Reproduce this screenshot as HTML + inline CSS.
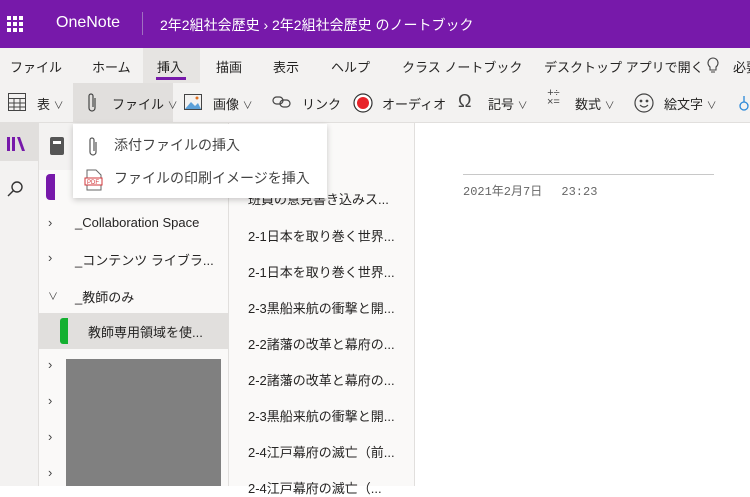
<!DOCTYPE html>
<html><head><meta charset="utf-8"><style>
*{margin:0;padding:0;box-sizing:border-box}
body{width:750px;height:486px;overflow:hidden;position:relative;font-family:"Liberation Sans","Noto Sans CJK JP",sans-serif;background:#fff;color:#252423}
.a{position:absolute;white-space:nowrap}
.hdr{left:0;top:0;width:750px;height:48px;background:#7719aa;color:#fff}
.tabs{left:0;top:48px;width:750px;height:35px;background:#f3f2f1;font-size:13px}
.tb{left:0;top:83px;width:750px;height:39px;background:#f3f2f1;font-size:13px}
.chev{font-size:10px;color:#444}
.pg{font-size:13px;left:248px}
.sec{font-size:13px}
</style></head><body>
<div class="a hdr">
  <svg class="a" style="left:7px;top:16px" width="16" height="16"><g fill="#fff">
  <rect x="0" y="0" width="4" height="4"/><rect x="6" y="0" width="4" height="4"/><rect x="12" y="0" width="4" height="4"/>
  <rect x="0" y="6" width="4" height="4"/><rect x="6" y="6" width="4" height="4"/><rect x="12" y="6" width="4" height="4"/>
  <rect x="0" y="12" width="4" height="4"/><rect x="6" y="12" width="4" height="4"/><rect x="12" y="12" width="4" height="4"/></g></svg>
  <div class="a" style="left:56px;top:14px;font-size:16px">OneNote</div>
  <div class="a" style="left:142px;top:12px;width:1px;height:23px;background:#a070c0"></div>
  <div class="a" style="left:160px;top:15px;font-size:14px">2年2組社会歴史 › 2年2組社会歴史 のノートブック</div>
</div>
<div class="a tabs">
  <div class="a" style="left:143px;top:0;width:57px;height:35px;background:#e6e4e2"></div>
  <div class="a" style="left:10px;top:9px">ファイル</div>
  <div class="a" style="left:92px;top:9px">ホーム</div>
  <div class="a" style="left:157px;top:9px">挿入</div>
  <div class="a" style="left:156px;top:29px;width:30px;height:3px;background:#7719aa"></div>
  <div class="a" style="left:216px;top:9px">描画</div>
  <div class="a" style="left:273px;top:9px">表示</div>
  <div class="a" style="left:331px;top:9px">ヘルプ</div>
  <div class="a" style="left:402px;top:9px">クラス ノートブック</div>
  <div class="a" style="left:544px;top:9px">デスクトップ アプリで開く</div>
  <svg class="a" style="left:707px;top:9px" width="12" height="18" fill="none" stroke="#444" stroke-width="1.1"><path d="M3 10a5 5 0 1 1 6 0v3H3z M4 15h4"/></svg>
  <div class="a" style="left:733px;top:9px">必要</div>
</div>
<div class="a tb">
  <div class="a" style="left:73px;top:0;width:100px;height:39px;background:#e1dfdd"></div>
  <svg class="a" style="left:8px;top:10px" width="18" height="18" fill="none" stroke="#444"><rect x=".5" y=".5" width="17" height="17"/><path d="M.5 5.5h17M.5 10h17M.5 14h17M6 5.5v12M12 5.5v12"/></svg>
  <div class="a" style="left:37px;top:11px">表 <span class="chev">∨</span></div>
  <svg class="a" style="left:86px;top:9px" width="12" height="22" fill="none" stroke="#444" stroke-width="1.2"><path d="M9 6v10a3 3 0 0 1-6 0V4a2 2 0 0 1 4 0v11"/></svg>
  <div class="a" style="left:112px;top:11px">ファイル <span class="chev">∨</span></div>
  <svg class="a" style="left:184px;top:11px" width="18" height="16"><rect x=".5" y=".5" width="17" height="15" fill="none" stroke="#444"/><path d="M1 15l6-7 4 4 3-3 3 6z" fill="#5ca0d8"/><circle cx="13" cy="4" r="1.5" fill="#e07020"/></svg>
  <div class="a" style="left:213px;top:11px">画像 <span class="chev">∨</span></div>
  <svg class="a" style="left:272px;top:13px" width="20" height="12" fill="none" stroke="#444" stroke-width="1.2"><rect x="1" y="1" width="10" height="7" rx="3.5"/><rect x="8" y="4" width="10" height="7" rx="3.5"/></svg>
  <div class="a" style="left:302px;top:11px">リンク</div>
  <svg class="a" style="left:353px;top:10px" width="20" height="20"><circle cx="10" cy="10" r="9" fill="#fff" stroke="#333" stroke-width="1.2"/><circle cx="10" cy="10" r="6" fill="#e8232a"/></svg>
  <div class="a" style="left:382px;top:11px">オーディオ</div>
  <div class="a" style="left:458px;top:8px;font-size:18px;color:#444">Ω</div>
  <div class="a" style="left:488px;top:11px">記号 <span class="chev">∨</span></div>
  <div class="a" style="left:547px;top:6px;font-size:11px;color:#444;line-height:9px;text-align:center">+÷<br>×=</div>
  <div class="a" style="left:575px;top:11px">数式 <span class="chev">∨</span></div>
  <svg class="a" style="left:634px;top:10px" width="20" height="20" fill="none" stroke="#444" stroke-width="1.2"><circle cx="10" cy="10" r="9"/><circle cx="7" cy="8" r=".8" fill="#444"/><circle cx="13" cy="8" r=".8" fill="#444"/><path d="M6 12q4 4 8 0"/></svg>
  <div class="a" style="left:664px;top:11px">絵文字 <span class="chev">∨</span></div>
  <svg class="a" style="left:738px;top:11px" width="12" height="18" fill="none" stroke="#2b88d8" stroke-width="1.3"><circle cx="6" cy="12" r="4"/><path d="M6 8V2"/></svg>
</div>
<div class="a" style="left:0;top:122px;width:750px;height:1px;background:#e1dfdd"></div>
<div class="a" style="left:0;top:123px;width:38px;height:363px;background:#f3f2f1"></div>
<div class="a" style="left:0;top:123px;width:38px;height:38px;background:#e1dfdd"></div>
<svg class="a" style="left:6px;top:136px" width="20" height="16" fill="#7719aa"><rect x="1" y="1" width="3" height="14"/><rect x="6" y="1" width="3" height="14"/><path d="M11 1h3l5 14h-3z"/></svg>
<svg class="a" style="left:6px;top:180px" width="18" height="18" fill="none" stroke="#333" stroke-width="1.4"><circle cx="11" cy="7" r="5"/><path d="M7.5 10.5L2 16"/></svg>
<div class="a" style="left:38px;top:123px;width:190px;height:363px;background:#faf9f8;border-left:1px solid #e1dfdd"></div>
<div class="a" style="left:39px;top:123px;width:189px;height:47px;background:#f3f2f1"></div>
<svg class="a" style="left:50px;top:137px" width="16" height="18"><rect x="0" y="0" width="14" height="18" rx="2" fill="#555"/><rect x="3" y="4" width="8" height="3" fill="#fff"/></svg>
<div class="a" style="left:46px;top:174px;width:9px;height:26px;background:#7719aa;border-radius:4px 0 0 4px"></div>
<div class="a chev" style="left:48px;top:215px;font-size:13px">›</div>
<div class="a sec" style="left:75px;top:215px">_Collaboration Space</div>
<div class="a chev" style="left:48px;top:250px;font-size:13px">›</div>
<div class="a sec" style="left:75px;top:250px">_コンテンツ ライブラ...</div>
<div class="a chev" style="left:48px;top:288px">∨</div>
<div class="a sec" style="left:75px;top:287px">_教師のみ</div>
<div class="a" style="left:39px;top:313px;width:189px;height:36px;background:#e1dfdd"></div>
<div class="a" style="left:60px;top:318px;width:8px;height:26px;background:#13b030;border-radius:3px 0 0 3px"></div>
<div class="a sec" style="left:88px;top:322px">教師専用領域を使...</div>
<div class="a" style="left:66px;top:359px;width:155px;height:127px;background:#808080"></div>
<div class="a chev" style="left:48px;top:357px;font-size:13px">›</div>
<div class="a chev" style="left:48px;top:393px;font-size:13px">›</div>
<div class="a chev" style="left:48px;top:429px;font-size:13px">›</div>
<div class="a chev" style="left:48px;top:465px;font-size:13px">›</div>
<div class="a" style="left:228px;top:123px;width:187px;height:363px;background:#faf9f8;border-left:1px solid #e1dfdd;border-right:1px solid #e1dfdd"></div>
<div class="a pg" style="top:189px">班員の意見書き込みス...</div>
<div class="a pg" style="top:226px">2-1日本を取り巻く世界...</div>
<div class="a pg" style="top:262px">2-1日本を取り巻く世界...</div>
<div class="a pg" style="top:298px">2-3黒船来航の衝撃と開...</div>
<div class="a pg" style="top:334px">2-2諸藩の改革と幕府の...</div>
<div class="a pg" style="top:370px">2-2諸藩の改革と幕府の...</div>
<div class="a pg" style="top:406px">2-3黒船来航の衝撃と開...</div>
<div class="a pg" style="top:442px">2-4江戸幕府の滅亡（前...</div>
<div class="a pg" style="top:478px">2-4江戸幕府の滅亡（...</div>
<div class="a" style="left:463px;top:174px;width:251px;height:1px;background:#c8c8c8"></div>
<div class="a" style="left:463px;top:182px;font-size:12px;color:#666;font-family:'Liberation Mono','Noto Sans CJK JP',monospace">2021年2月7日　 23:23</div>
<div class="a" style="left:73px;top:124px;width:254px;height:74px;background:#fff;box-shadow:0 2px 6px rgba(0,0,0,.2)">
  <svg class="a" style="left:14px;top:12px" width="12" height="22" fill="none" stroke="#555" stroke-width="1.2"><path d="M9 6v10a3 3 0 0 1-6 0V4a2 2 0 0 1 4 0v11"/></svg>
  <div class="a" style="left:41px;top:11px;font-size:14px;color:#444">添付ファイルの挿入</div>
  <svg class="a" style="left:11px;top:45px" width="20" height="22"><path d="M3 1h9l5 5v15H3z" fill="#fff" stroke="#666"/><rect x="1" y="9" width="17" height="7" fill="#fff" stroke="#d13438"/><text x="3" y="15" font-size="6" fill="#d13438" font-family="Liberation Sans">PDF</text></svg>
  <div class="a" style="left:41px;top:44px;font-size:14px;color:#444">ファイルの印刷イメージを挿入</div>
</div>
</body></html>
